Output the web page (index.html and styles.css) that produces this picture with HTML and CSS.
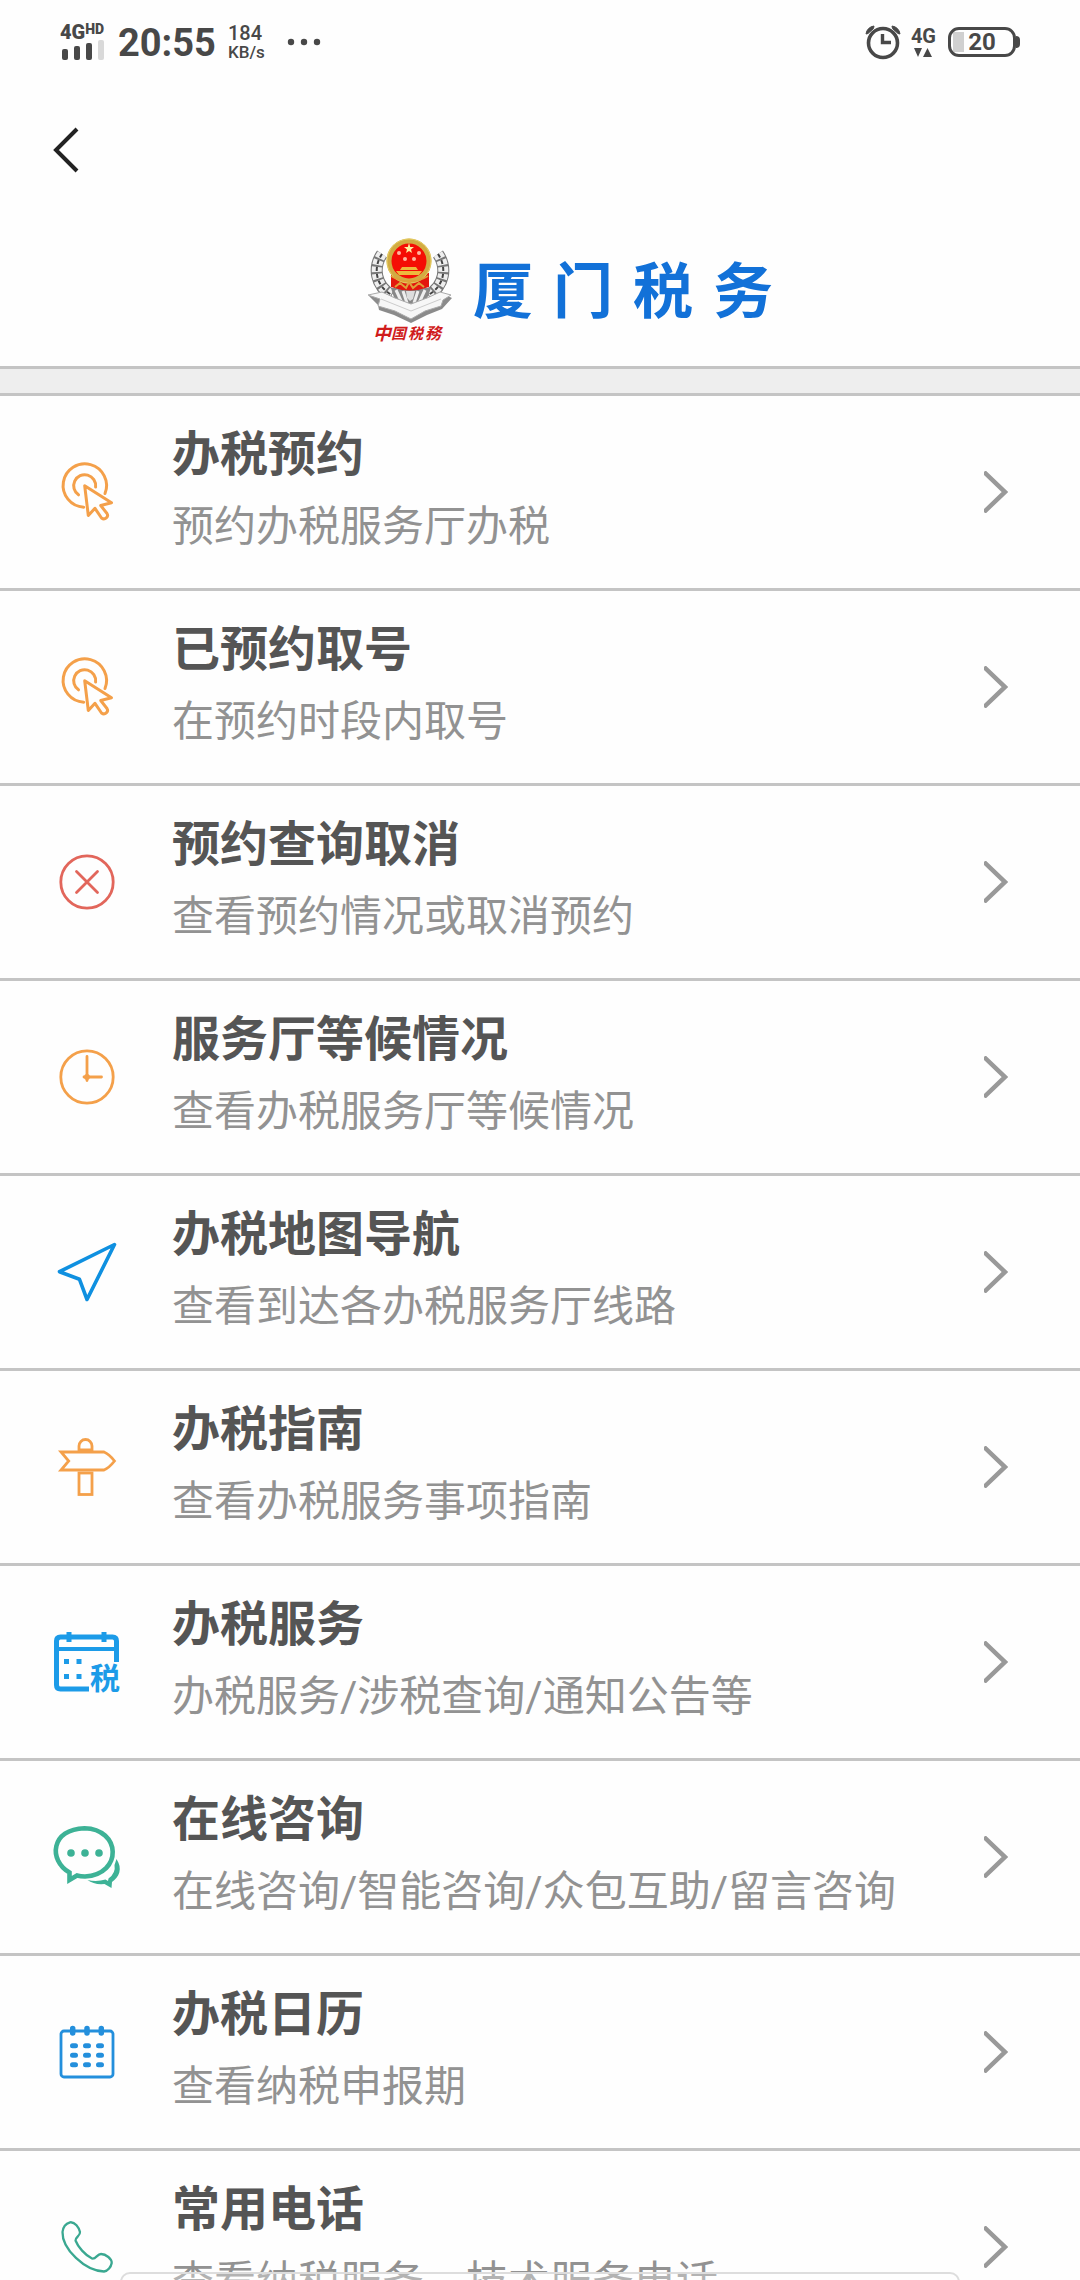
FILE: index.html
```html
<!DOCTYPE html>
<html lang="zh-CN">
<head>
  <meta charset="UTF-8" />
  <meta name="viewport" content="width=device-width, initial-scale=1.0"/>
  <title>厦门税务</title>
  <link rel="stylesheet" href="styles.css">
</head>
<body>

  <!-- shared icons -->
  <svg class="defs" aria-hidden="true">
    <symbol id="chevron" viewBox="0 0 24 42">
      <path d="M0 1 L21 21 L0 41" fill="none" stroke="#999" stroke-width="4.500"/>
    </symbol>
    <symbol id="click" viewBox="0 0 80 80">
      <g fill="none" stroke="#f4a04a" stroke-width="3" stroke-linecap="round" stroke-linejoin="round">
        <path d="M58 41.5 A21.7 21.7 0 1 0 36.7 55.2"/>
        <path d="M48.6 35 A11 11 0 1 0 31.5 42.8"/>
        <path d="M37.7 33.7 L64.5 50.8 L53.7 53.5 L60 61.5 C62 64.5 58 68.5 54.5 66 L48 56.3 L41.3 63.5 Z"/>
      </g>
    </symbol>
  </svg>

  <div class="app">
    <div class="status">
      <div class="signal">
        <div class="net">4G<sup>HD</sup></div>
        <svg width="44" height="20" viewBox="0 0 44 20">
          <g fill="#484848">
            <rect x="0" y="9" width="6" height="11" rx="2"/>
            <rect x="12" y="6" width="6" height="14" rx="2"/>
            <rect x="24" y="3" width="6" height="17" rx="2"/>
          </g>
          <rect x="36" y="0" width="6" height="20" rx="2" fill="#d9d9d9"/>
        </svg>
      </div>
      <div class="time">20:55</div>
      <div class="speed"><span>184</span><small>KB/s</small></div>
      <svg class="more" width="34" height="8" viewBox="0 0 34 8" fill="#484848">
        <circle cx="4" cy="4" r="3.2"/><circle cx="17" cy="4" r="3.2"/><circle cx="30" cy="4" r="3.2"/>
      </svg>
      <svg class="alarm" width="36" height="36" viewBox="0 0 36 36" fill="none" stroke="#484848">
        <circle cx="18" cy="19" r="14.5" stroke-width="3.6"/>
        <path d="M17.5 10 V18.5 H26" stroke-width="3.4"/>
        <path d="M1 10 A9 9 0 0 1 9 2 L8.500 4.500 L3 9.500 Z M35 10 A9 9 0 0 0 27 2 L27.500 4.500 L33 9.500 Z" fill="#484848" stroke-width="1"/>
      </svg>
      <div class="data">
        <span>4G</span>
        <svg width="18" height="9" viewBox="0 0 18 9" fill="#484848"><path d="M0 0 H8 L4 9 Z M9 9 H18 L13.500 0 Z"/></svg>
      </div>
      <div class="battery"><span>20</span></div>
    </div>

    <header class="header">
      <button class="back" type="button" aria-label="返回">
        <svg width="28" height="48" viewBox="0 0 28 48"><path d="M24 3 L3 24 L24 45" fill="none" stroke="#222" stroke-width="4"/></svg>
      </button>
      <div class="brand">
        <svg class="emblem" width="88" height="106" viewBox="0 0 88 106">
          <!-- wreath -->
          <g fill="none">
            <path d="M15 16 C6 29 8 48 25 57 M71 16 C80 29 78 48 61 57" stroke="#777" stroke-width="12"/>
            <path d="M15 16 C6 29 8 48 25 57 M71 16 C80 29 78 48 61 57" stroke="#eee" stroke-width="10" stroke-dasharray="5 2"/>
            <path d="M15 16 C6 29 8 48 25 57 M71 16 C80 29 78 48 61 57" stroke="#444" stroke-width="2" stroke-dasharray="4 3"/>
          </g>
          <path d="M24 50 H64 L58 66 H29 Z" fill="#888"/>
          <path d="M29 52 L35 65 M36 53 L40 65 M58 52 L52 65 M51 53 L47 65" stroke="#eee" stroke-width="3"/>
          <path d="M39 53 H48 L46 61 L43 63 L40 60 Z" fill="#ddd"/>
          <!-- book -->
          <path d="M2 58 L15 54 L29 61 L44 68 L60 61 L72 54 L85 60 L75 71 L60 77 L44 85 L27 77 L12 72 L11 67 Z" fill="#8b8b8b"/>
          <path d="M1 57 L15 54 L28 60 L44 66 L60 60 L73 54 L84 57 L76 62 L74 68 L58 73 L44 81 L28 73 L11 68 L13 61 Z" fill="#f7f7f7" stroke="#aaa" stroke-width="1"/>
          <path d="M14 61 L44 73 L74 61" fill="none" stroke="#ccc" stroke-width="1"/>
          <!-- national emblem -->
          <path d="M24 35 H62 V49 Q43 56 24 49 Z" fill="#e3170d"/>
          <circle cx="42" cy="23" r="20" fill="#f50d05" stroke="#d2ab42" stroke-width="5"/>
          <circle cx="42" cy="23" r="22" fill="none" stroke="#e6cf66" stroke-width="1"/>
          <path d="M42 5 L43.200 9 H47 L44 11.500 L45 15 L42 13 L39 15 L40 11.500 L37 9 H40.800 Z" fill="#fff0a0"/>
          <g fill="#ffb5a0"><circle cx="32" cy="15" r="2"/><circle cx="52" cy="15" r="2"/><circle cx="38" cy="21" r="2"/><circle cx="47" cy="21" r="2"/></g>
          <path d="M35 29 H49 L51 32 H33 Z M29 33 H55 L52 37 H32 Z" fill="#edb83d"/>
          <path d="M24 38 Q34 44 42 43 Q51 44 61 38 M28 49 L33 45 L39 50 L42 44 L46 50 L52 45 L57 49" fill="none" stroke="#dfa039" stroke-width="2"/>
          <!-- brush lettering -->
          <text class="brush" x="6" y="102" font-size="18">中</text>
          <text class="brush" x="24" y="101" font-size="15">国</text>
          <text class="brush" x="41" y="101" font-size="15">税</text>
          <text class="brush" x="58" y="101" font-size="16">務</text>
        </svg>
        <h1 class="name"><span>厦</span><span>门</span><span>税</span><span>务</span></h1>
      </div>
    </header>

    <ul class="menu">
      <li>
        <a class="item" href="#">
          <svg class="icon"><use href="#click"/></svg>
          <div class="text"><h2>办税预约</h2><p>预约办税服务厅办税</p></div>
          <svg class="arrow"><use href="#chevron"/></svg>
        </a>
      </li>
      <li>
        <a class="item" href="#">
          <svg class="icon"><use href="#click"/></svg>
          <div class="text"><h2>已预约取号</h2><p>在预约时段内取号</p></div>
          <svg class="arrow"><use href="#chevron"/></svg>
        </a>
      </li>
      <li>
        <a class="item" href="#">
          <svg class="icon" viewBox="0 0 80 80" fill="none" stroke="#e2665b" stroke-width="2.800" stroke-linecap="round">
            <circle cx="40" cy="40" r="26.2"/>
            <path d="M29.500 29.500 L50.500 50.500 M50.500 29.500 L29.500 50.500"/>
          </svg>
          <div class="text"><h2>预约查询取消</h2><p>查看预约情况或取消预约</p></div>
          <svg class="arrow"><use href="#chevron"/></svg>
        </a>
      </li>
      <li>
        <a class="item" href="#">
          <svg class="icon" viewBox="0 0 80 80" fill="none" stroke="#f4a04a" stroke-width="2.800" stroke-linecap="round">
            <circle cx="40" cy="40" r="26.2"/>
            <path d="M40 19.500 V43.500 M37 40 H54.500"/>
            <circle cx="40" cy="40" r="1.500" fill="#f4a04a"/>
          </svg>
          <div class="text"><h2>服务厅等候情况</h2><p>查看办税服务厅等候情况</p></div>
          <svg class="arrow"><use href="#chevron"/></svg>
        </a>
      </li>
      <li>
        <a class="item" href="#">
          <svg class="icon" viewBox="0 0 80 80" fill="none" stroke="#0f90e0" stroke-width="3.600" stroke-linejoin="round">
            <path d="M67.500 12.500 L12.500 39.700 L32.500 47.300 L40 67.500 Z"/>
          </svg>
          <div class="text"><h2>办税地图导航</h2><p>查看到达各办税服务厅线路</p></div>
          <svg class="arrow"><use href="#chevron"/></svg>
        </a>
      </li>
      <li>
        <a class="item" href="#">
          <svg class="icon" viewBox="0 0 80 80" fill="none" stroke="#f4a04a" stroke-width="2.800">
            <path d="M14 25 H57 Q62 27 67.500 34 Q62 41 57 43 H14 L21.700 34 Z"/>
            <path d="M32 23 V19 A6.500 6.500 0 0 1 45 19 V23 Z"/>
            <rect x="32" y="46" width="13" height="21.500"/>
          </svg>
          <div class="text"><h2>办税指南</h2><p>查看办税服务事项指南</p></div>
          <svg class="arrow"><use href="#chevron"/></svg>
        </a>
      </li>
      <li>
        <a class="item" href="#">
          <svg class="icon" viewBox="0 0 80 80">
            <g fill="none" stroke="#1c9be8" stroke-width="5">
              <path d="M42 67 H13.500 Q9.500 67 9.500 63 V19 Q9.500 15 13.500 15 H65.500 Q69.500 15 69.500 19 V40"/>
              <path d="M9.500 27 H69.500" stroke-width="4"/>
              <path d="M22 10 V20 M57 10 V20"/>
            </g>
            <path d="M17 37 h5 v5 h-5 Z M29.500 37 h5 v5 h-5 Z M17 52 h5 v5 h-5 Z M29.500 52 h5 v5 h-5 Z" fill="#1c9be8"/>
            <text class="tax" x="43" y="67" font-size="30">税</text>
          </svg>
          <div class="text"><h2>办税服务</h2><p>办税服务/涉税查询/通知公告等</p></div>
          <svg class="arrow"><use href="#chevron"/></svg>
        </a>
      </li>
      <li>
        <a class="item" href="#">
          <svg class="icon" viewBox="0 0 80 80">
            <path d="M22.500 55.500 C1 43 4 12 37.500 11.200 C74 12 76 57 38 59.500 Q33.500 59.500 30 58.500 L22.500 63 Z" fill="none" stroke="#3db296" stroke-width="4.600"/>
            <path d="M69.500 42 C76 52 72 60 65 65 L64.500 71 L57.500 67 Q47 68 40.500 63 Q50 65 58.500 62.500 L61 64 L61.500 61.500 Q69 56 67.500 48 Z" fill="#3db296"/>
            <g fill="#3db296"><circle cx="24" cy="36" r="3.800"/><circle cx="38" cy="36" r="3.800"/><circle cx="52" cy="36" r="3.800"/></g>
          </svg>
          <div class="text"><h2>在线咨询</h2><p>在线咨询/智能咨询/众包互助/留言咨询</p></div>
          <svg class="arrow"><use href="#chevron"/></svg>
        </a>
      </li>
      <li>
        <a class="item" href="#">
          <svg class="icon" viewBox="0 0 80 80" fill="none" stroke="#238fdc" stroke-linecap="round">
            <rect x="14" y="19" width="52" height="46" rx="3" stroke-width="2.800"/>
            <path d="M25.700 16.500 V21 M40 16.500 V21 M54.300 16.500 V21" stroke-width="5.500"/>
            <path d="M25.500 33.700 h3 M38.500 33.700 h3 M51.500 33.700 h3 M25.500 43.300 h3 M38.500 43.300 h3 M51.500 43.300 h3 M25.500 52.700 h3 M38.500 52.700 h3 M51.500 52.700 h3" stroke-width="5"/>
          </svg>
          <div class="text"><h2>办税日历</h2><p>查看纳税申报期</p></div>
          <svg class="arrow"><use href="#chevron"/></svg>
        </a>
      </li>
      <li>
        <a class="item" href="#">
          <svg class="icon" viewBox="0 0 80 80" fill="none" stroke="#3aa891" stroke-width="2.300">
            <path d="M15.500 25 C16 20 19 16.500 23 15.300 C28 14.500 32 21 33 25 C33.500 29 28 30 28.500 33.500 C31 40 38 48 45 51.500 C49 52.500 50 47 54 47 C59 47 65 52 64.700 56 C64 60 61 64 57 64.500 C38 64 15 42 15.500 25 Z"/>
          </svg>
          <div class="text"><h2>常用电话</h2><p>查看纳税服务、技术服务电话</p></div>
          <svg class="arrow"><use href="#chevron"/></svg>
        </a>
      </li>
    </ul>

    <div class="sheet"></div>
  </div>

</body>
</html>
```

FILE: styles.css
```css
* { box-sizing: border-box; }
body { margin: 0; background: #fefefe; font-family: Roboto, "Noto Sans CJK SC", sans-serif; }
h1, h2, p, ul { margin: 0; padding: 0; }
svg { display: block; flex: none; }
.defs { position: absolute; width: 0; height: 0; }
.app { position: relative; height: 100vh; overflow: hidden; display: flex; flex-direction: column; }

/* status bar */
.status { flex: none; display: flex; align-items: center; height: 84px; padding: 0 64px 0 60px; color: #484848; }
.signal { width: 58px; }
.signal svg { margin-left: 2px; }
.net { height: 16px; font-size: 20px; line-height: 16px; font-weight: 900; white-space: nowrap; }
.net sup { font-size: 14px; line-height: 10px; vertical-align: 5px; }
.time { padding-top: 2px; font-size: 38px; line-height: 48px; font-weight: 700; }
.speed { display: flex; flex-direction: column; margin-left: 12px; font-weight: 500; font-size: 20px; line-height: 20px; }
.speed small { font-size: 17px; line-height: 18px; }
.more { margin-left: 22px; }
.alarm { margin-left: auto; }
.data { display: flex; flex-direction: column; align-items: center; gap: 3px; margin: 0 12px 0 10px; font-size: 20px; line-height: 18px; font-weight: 700; }
.battery { position: relative; width: 68px; height: 30px; border: 3px solid #484848; border-radius: 11px; background: linear-gradient(#d0d0d0, #d0d0d0) 2px 2px / 11px 20px no-repeat; font-size: 24px; line-height: 24px; font-weight: 700; text-align: center; }
.battery::after { content: ""; position: absolute; right: -7px; top: 6px; width: 4px; height: 12px; border-radius: 0 4px 4px 0; background: #484848; }

/* header */
.header { flex: none; padding: 42px 53px 22px; border-bottom: 3px solid #c4c4c4; }
.back { display: block; padding: 0; border: 0; background: none; cursor: pointer; }
.brand { display: flex; align-items: center; justify-content: center; gap: 18px; margin-top: 64px; padding-left: 60px; }
.name { display: flex; gap: 20px; padding-top: 4px; font-size: 60px; line-height: 80px; font-weight: 700; color: #1271d8; }
.brush { font-family: "Noto Sans CJK SC", sans-serif; font-style: italic; font-weight: 700; fill: #d01c1c; }

/* menu */
.menu { flex: none; list-style: none; padding-top: 24px; background: #eee; }
.menu li { border-bottom: 3px solid #c4c4c4; background: #fefefe; }
.menu li:first-child { border-top: 3px solid #c4c4c4; }
.item { display: flex; align-items: center; height: 192px; padding: 0 72px 0 47px; color: inherit; text-decoration: none; }
.icon { width: 80px; height: 80px; }
.tax { font-family: "Noto Sans CJK SC", sans-serif; font-weight: 700; fill: #1c9be8; }
.text { flex: 1; margin-left: 45px; padding-bottom: 2px; }
.text h2 { font-size: 48px; line-height: 72px; font-weight: 700; color: #555; }
.text p { font-size: 42px; line-height: 72px; color: #929292; }
.arrow { width: 24px; height: 42px; }

/* top edge of the panel below the list */
.sheet { position: absolute; left: 120px; right: 120px; bottom: -40px; height: 48px; border: 2px solid #ddd; border-radius: 10px; background: rgba(255, 255, 255, 0.3); }
```
